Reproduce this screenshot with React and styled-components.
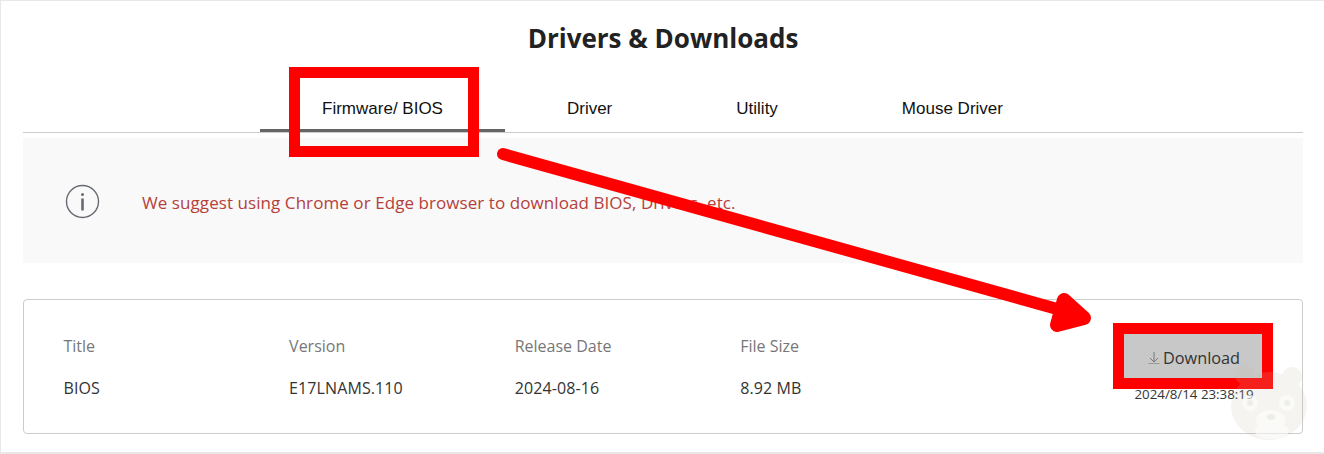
import styled, {createGlobalStyle} from 'styled-components';

const GlobalStyle = createGlobalStyle`
  html, body {
    margin: 0;
    padding: 0;
    background: #fff;
  }
  * {
    box-sizing: border-box;
  }
`;

const TABS = ['Firmware/ BIOS', 'Driver', 'Utility', 'Mouse Driver'];

const COLUMNS = [
  {title: 'Title', value: 'BIOS'},
  {title: 'Version', value: 'E17LNAMS.110'},
  {title: 'Release Date', value: '2024-08-16'},
  {title: 'File Size', value: '8.92 MB'},
];

const Page = styled.div`
  position: relative;
  width: 1324px;
  height: 454px;
  overflow: hidden;
  padding: 0 21px 0 22px;
  border-top: 1px solid #e8e8e8;
  border-left: 1px solid #e8e8e8;
  border-bottom: 2px solid #e8e8e8;
  font-family: 'Open Sans', 'Noto Sans', sans-serif;
`;

const Heading = styled.h2`
  margin: 0;
  height: 83px;
  padding-top: 19px;
  text-align: center;
  font-size: 26px;
  line-height: 36px;
  font-weight: 700;
  color: #222;
`;

const TabBar = styled.div`
  display: flex;
  justify-content: center;
  height: 49px;
  padding-right: 1px;
  border-bottom: 1px solid #ccc;
`;

const Tab = styled.div`
  height: 48px;
  padding: 0 62px;
  border-bottom: 3px solid ${(props) => (props.$active ? '#666' : 'transparent')};
  margin-bottom: -1px;
  font-family: 'Liberation Sans', Arial, sans-serif;
  font-size: 17px;
  line-height: 50px;
  color: #111;
  white-space: nowrap;
`;

const Notice = styled.div`
  display: flex;
  align-items: center;
  height: 125px;
  margin-top: 5px;
  padding: 2px 0 0 42px;
  background: #f9f9f9;
`;

const NoticeIcon = styled.svg`
  width: 35px;
  height: 35px;
  margin-right: 42px;
  flex: none;
`;

const NoticeText = styled.p`
  margin: 2px 0 0;
  font-size: 17px;
  letter-spacing: 0.07px;
  color: #b5403a;
`;

const Card = styled.div`
  display: flex;
  align-items: center;
  justify-content: space-between;
  height: 135px;
  margin-top: 36px;
  padding: 0 38px 0 39.5px;
  border: 1px solid #ccc;
  border-radius: 4px;
`;

const Columns = styled.div`
  display: flex;
`;

const Column = styled.div`
  width: 225.6px;
  font-size: 16px;
  line-height: 22px;
`;

const ColumnTitle = styled.div`
  color: #777;
  margin-bottom: 20px;
`;

const ColumnValue = styled.div`
  color: #333;
  letter-spacing: 0.1px;
`;

const Actions = styled.div`
  display: flex;
  flex-direction: column;
  align-items: center;
  width: 140px;
  margin-top: 4px;
`;

const DownloadButton = styled.button`
  display: flex;
  align-items: center;
  justify-content: center;
  gap: 3px;
  width: 140px;
  height: 44px;
  border: 0;
  padding: 3px 0 0;
  background: #c8c8c8;
  color: #333;
  font-family: inherit;
  font-size: 16.3px;
`;

const Timestamp = styled.div`
  margin-top: 7px;
  font-size: 13.3px;
  line-height: 18px;
  color: #333;
  white-space: nowrap;
`;

const Annotations = styled.svg`
  position: absolute;
  left: -1px;
  top: -1px;
  width: 1324px;
  height: 454px;
  pointer-events: none;
`;

const Mascot = styled.svg`
  position: absolute;
  left: 1224px;
  top: 359px;
  width: 95px;
  height: 94px;
  pointer-events: none;
`;

const App = () => {
  return (
    <Page>
      <GlobalStyle />
      <Heading>Drivers &amp; Downloads</Heading>
      <TabBar>
        {TABS.map((tab, i) => (
          <Tab key={tab} $active={i === 0}>{tab}</Tab>
        ))}
      </TabBar>
      <Notice>
        <NoticeIcon viewBox="0 0 35 35" fill="none">
          <circle cx="17.5" cy="17.5" r="16" stroke="#666b72" strokeWidth="1.4" />
          <circle cx="17.5" cy="10.5" r="1.5" fill="#666b72" />
          <rect x="16.2" y="14.5" width="2.6" height="12" fill="#666b72" />
        </NoticeIcon>
        <NoticeText>We suggest using Chrome or Edge browser to download BIOS, Drivers, etc.</NoticeText>
      </Notice>
      <Card>
        <Columns>
          {COLUMNS.map((col) => (
            <Column key={col.title}>
              <ColumnTitle>{col.title}</ColumnTitle>
              <ColumnValue>{col.value}</ColumnValue>
            </Column>
          ))}
        </Columns>
        <Actions>
          <DownloadButton>
            <svg width="12" height="14" viewBox="0 0 12 14" fill="none" stroke="#777" strokeWidth="1">
              <path d="M6 1v10M2 7l4 4 4-4" />
              <path d="M0.5 12.5h11" stroke="#999" />
            </svg>
            Download
          </DownloadButton>
          <Timestamp>2024/8/14 23:38:19</Timestamp>
        </Actions>
      </Card>
      <Annotations viewBox="0 0 1324 454" fill="none" stroke="#ff0000">
        <rect x="294.5" y="72.5" width="179" height="79" strokeWidth="11" />
        <rect x="1118.5" y="328.5" width="149" height="55" strokeWidth="11" />
        <path d="M503 154 L1075 314" strokeWidth="12" strokeLinecap="round" />
        <path
          d="M1064 300 L1084 318 L1057 325 Z"
          fill="#ff0000"
          strokeWidth="14"
          strokeLinejoin="round"
        />
      </Annotations>
      <Mascot viewBox="0 0 95 94">
        <g fill="#c8bea8" opacity="0.16">
          <circle cx="20" cy="15" r="10" />
          <circle cx="67" cy="17" r="10" />
          <ellipse cx="44" cy="46" rx="38" ry="34" />
        </g>
        <g fill="#fff" opacity="0.55">
          <circle cx="25" cy="43" r="8" />
          <circle cx="62" cy="43" r="8" />
          <ellipse cx="46" cy="60" rx="15" ry="10" />
          <ellipse cx="47" cy="71" rx="17" ry="8" />
        </g>
        <g fill="#c8bea8" opacity="0.2">
          <circle cx="25" cy="43" r="3" />
          <circle cx="62" cy="43" r="3" />
          <ellipse cx="46" cy="57" rx="4" ry="3" />
        </g>
      </Mascot>
    </Page>
  );
};

export default App;
